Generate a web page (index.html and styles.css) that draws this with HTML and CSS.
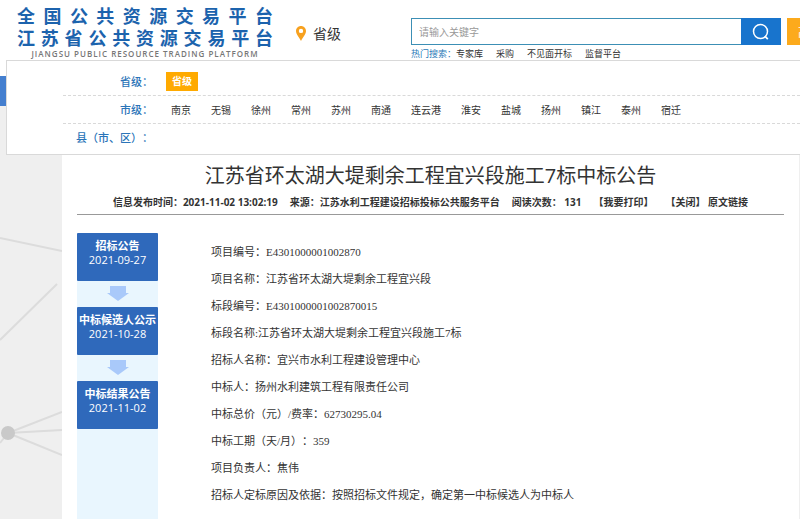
FILE: index.html
```html
<!DOCTYPE html>
<html lang="zh-CN">
<head>
<meta charset="utf-8">
<meta name="viewport" content="width=device-width, initial-scale=1">
<title>江苏省公共资源交易平台</title>
<link rel="stylesheet" href="styles.css">
</head>
<body>
<header class="header">
  <div class="logo">
    <div class="logo-line">全国公共资源交易平台</div>
    <div class="logo-line">江苏省公共资源交易平台</div>
    <div class="logo-sub">JIANGSU PUBLIC RESOURCE TRADING PLATFORM</div>
  </div>
  <div class="region">
    <svg class="pin" viewBox="0 0 10 15" aria-hidden="true"><path fill="#f7a11f" fill-rule="evenodd" d="M5 0C2.200 0 0 2.200 0 5c0 3.500 3.500 6.500 5 10 1.500-3.500 5-6.500 5-10 0-2.800-2.200-5-5-5zm0 2.700a2.200 2.200 0 1 1 0 4.400 2.200 2.200 0 0 1 0-4.400z"/></svg>
    <span>省级</span>
  </div>
  <div class="search">
    <form class="search-form">
      <input class="search-input" type="text" placeholder="请输入关键字" aria-label="请输入关键字">
      <button class="search-button" type="button" aria-label="搜索">
        <svg viewBox="0 0 18 18" width="18" height="18" fill="none" stroke="#fff" aria-hidden="true"><circle cx="8.500" cy="8.500" r="7" stroke-width="1.500"/><path stroke-width="1.800" d="M12.800 13.200l3 3"/></svg>
      </button>
      <button class="more-button" type="button">高</button>
    </form>
    <nav class="hot">
      <span class="hot-label">热门搜索：</span>
      <a href="#">专家库</a>
      <a href="#">采购</a>
      <a href="#">不见面开标</a>
      <a href="#">监督平台</a>
    </nav>
  </div>
</header>

<div class="bar">
  <section class="panel">
    <div class="row">
      <span class="row-label">省级：</span>
      <div class="row-items"><a class="current" href="#">省级</a></div>
    </div>
    <div class="row">
      <span class="row-label">市级：</span>
      <div class="row-items">
        <a href="#">南京</a><a href="#">无锡</a><a href="#">徐州</a><a href="#">常州</a><a href="#">苏州</a><a href="#">南通</a><a href="#">连云港</a><a href="#">淮安</a><a href="#">盐城</a><a href="#">扬州</a><a href="#">镇江</a><a href="#">泰州</a><a href="#">宿迁</a>
      </div>
    </div>
    <div class="row">
      <span class="row-label">县（市、区）：</span>
    </div>
  </section>
</div>

<div class="page">
  <svg class="network" viewBox="0 0 62 413" aria-hidden="true">
    <g fill="none" stroke="#dcdcdc" stroke-width="2">
      <path d="M0 132L62 145"/>
      <path d="M0 234L57 178"/>
      <path d="M8 327L62 306"/>
      <path d="M8 327L62 324"/>
      <path d="M8 327L62 349"/>
      <path d="M8 327L0 337"/>
    </g>
    <circle cx="8" cy="327" r="7" fill="#c9c9c9"/>
  </svg>
  <main class="main">
    <h1 class="title">江苏省环太湖大堤剩余工程宜兴段施工7标中标公告</h1>
    <div class="meta">
      <span>信息发布时间：2021-11-02 13:02:19</span>
      <span>来源：江苏水利工程建设招标投标公共服务平台</span>
      <span>阅读次数： 131</span>
      <a href="#">【我要打印】</a>
      <span><a href="#">【关闭】</a> <a href="#">原文链接</a></span>
    </div>
    <div class="content">
      <aside class="steps">
        <div class="step"><b>招标公告</b><span>2021-09-27</span></div>
        <svg class="arrow" viewBox="0 0 22 15" aria-hidden="true"><path fill="#a9c9fa" d="M3 0h16v7h3L11 15 0 7h3z"/></svg>
        <div class="step"><b>中标候选人公示</b><span>2021-10-28</span></div>
        <svg class="arrow" viewBox="0 0 22 15" aria-hidden="true"><path fill="#a9c9fa" d="M3 0h16v7h3L11 15 0 7h3z"/></svg>
        <div class="step"><b>中标结果公告</b><span>2021-11-02</span></div>
      </aside>
      <article class="detail">
        <p>项目编号：E4301000001002870</p>
        <p>项目名称：江苏省环太湖大堤剩余工程宜兴段</p>
        <p>标段编号：E4301000001002870015</p>
        <p>标段名称:江苏省环太湖大堤剩余工程宜兴段施工7标</p>
        <p>招标人名称：宜兴市水利工程建设管理中心</p>
        <p>中标人：扬州水利建筑工程有限责任公司</p>
        <p>中标总价（元）/费率：62730295.04</p>
        <p>中标工期（天/月）：359</p>
        <p>项目负责人：焦伟</p>
        <p>招标人定标原因及依据：按照招标文件规定，确定第一中标候选人为中标人</p>
      </article>
    </div>
  </main>
</div>
</body>
</html>
```
FILE: styles.css
```css
* {
  box-sizing: border-box;
}

body {
  display: flex;
  flex-direction: column;
  min-height: 100vh;
  margin: 0;
  background: #fff;
  color: #333;
  font-family: "Open Sans", "Noto Sans CJK SC", sans-serif;
  font-size: 10px;
  text-spacing-trim: space-all;
}

a {
  color: inherit;
  text-decoration: none;
}

.header {
  display: flex;
  height: 76px;
  padding-left: 17px;
  overflow: hidden;
}

.logo {
  width: 256px;
  padding-top: 4px;
  color: #1c63ad;
}

.logo-line {
  font-family: "Noto Sans CJK SC", sans-serif;
  font-size: 18px;
  font-weight: 700;
  line-height: 22px;
  text-align-last: justify;
}

.logo-sub {
  color: #777;
  font-size: 8px;
  font-weight: 600;
  letter-spacing: 1px;
  line-height: 12px;
  text-align: center;
  white-space: nowrap;
}

.region {
  display: flex;
  align-items: center;
  gap: 7px;
  height: 66px;
  margin-left: 23px;
  font-size: 14px;
}

.pin {
  width: 10px;
  height: 15px;
}

.search {
  flex: 1;
  min-width: 0;
  margin-left: 70px;
  padding-top: 18px;
}

.search-form {
  display: flex;
  height: 27px;
}

.search-input {
  flex: 1;
  min-width: 0;
  padding: 0 7px;
  border: 1px solid #3c8fb5;
  border-right: 0;
  border-radius: 0;
  outline: 0;
  font: inherit;
}

.search-input::placeholder {
  color: #999;
}

.search-button {
  display: flex;
  align-items: center;
  justify-content: center;
  width: 40px;
  padding: 0;
  border: 0;
  background: #1874cd;
}

.more-button {
  width: 13px;
  margin-left: 6px;
  padding: 0 0 0 11px;
  border: 0;
  overflow: hidden;
  background: #fcaa1c;
  color: #fff;
  font: inherit;
  font-size: 12px;
  text-align: left;
}

.hot {
  display: flex;
  gap: 13px;
  font-size: 9px;
  line-height: 18px;
}

.hot-label {
  margin-right: -13px;
  color: #2a7ab8;
}

.bar {
  position: relative;
  height: 30px;
  background: #447fcf;
}

.panel {
  position: absolute;
  z-index: 1;
  top: -16px;
  right: 0;
  left: 6px;
  padding: 7px 0 2px 56px;
  border: 1px solid #d9d9d9;
  border-right: 0;
  background: #fff;
}

.row {
  display: flex;
  align-items: center;
  gap: 13px;
  height: 28px;
  border-bottom: 1px dashed #d9d9d9;
}

.row:last-child {
  border-bottom: 0;
}

.row-label {
  width: 90px;
  color: #2a74b8;
  font-size: 11px;
  font-weight: 500;
  line-height: 16px;
  text-align: right;
}

.row-items {
  display: flex;
  gap: 20px;
  padding-left: 5px;
}

.current {
  margin-left: -5px;
  padding: 0 6px;
  background: #ffaa00;
  color: #fff;
  font-weight: 700;
  line-height: 19px;
}

.page {
  display: flex;
  flex: 1;
  position: relative;
  padding: 0 1px 0 62px;
  background: #efefef;
}

.network {
  position: absolute;
  top: 0;
  left: 0;
  width: 62px;
}

.main {
  display: flex;
  flex: 1;
  flex-direction: column;
  padding: 56px 15px 0;
  background: #fff;
}

.title {
  margin: 0;
  font-size: 20px;
  font-weight: 400;
  line-height: 28px;
  text-align: center;
}

.meta {
  display: flex;
  justify-content: center;
  gap: 12px;
  border-bottom: 1px solid #999;
  font-weight: 700;
  line-height: 24px;
  white-space: nowrap;
}

.content {
  display: flex;
  flex: 1;
  gap: 53px;
  padding-top: 18px;
}

.steps {
  display: flex;
  flex-direction: column;
  align-items: center;
  width: 81px;
  background: #e9f6fe;
}

.step {
  display: flex;
  flex-direction: column;
  align-items: center;
  width: 100%;
  height: 48px;
  padding-top: 6px;
  border-radius: 1px;
  background: #2f69bb;
  color: #fff;
  font-size: 11px;
  line-height: 14px;
  white-space: nowrap;
}

.arrow {
  width: 22px;
  height: 15px;
  margin: 5px 0 6px;
}

.detail {
  flex: 1;
  padding-top: 6px;
  font-family: "Liberation Serif", "Noto Sans CJK SC", serif;
  font-size: 11px;
  line-height: 27px;
}

.detail p {
  margin: 0;
}
```
